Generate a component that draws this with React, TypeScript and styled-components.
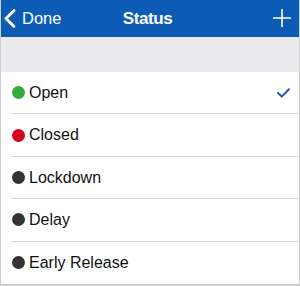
import styled, { createGlobalStyle } from "styled-components";

const Global = createGlobalStyle`
  html, body {
    margin: 0;
    padding: 0;
    background: #ffffff;
  }
  * {
    box-sizing: border-box;
  }
`;

const Screen = styled.div`
  width: 300px;
  height: 286px;
  display: flex;
  flex-direction: column;
  border-left: 1px solid #cfcfcf;
  border-right: 1px solid #cfcfcf;
  border-bottom: 2px solid #cfcfcf;
  font-family: "Liberation Sans", Arial, sans-serif;
  background: #ffffff;
`;

const NavBar = styled.div`
  height: 37px;
  flex: 0 0 37px;
  background: #0c5cb5;
  display: grid;
  grid-template-columns: 1fr auto 1fr;
  align-items: center;
  color: #ffffff;
  padding: 0 8px 0 3px;
`;

const BackButton = styled.div`
  display: flex;
  align-items: center;
  gap: 6px;
  font-size: 16.5px;
  justify-self: start;
`;

const Title = styled.div`
  font-size: 17px;
  font-weight: bold;
  letter-spacing: -0.4px;
`;

const AddButton = styled.div`
  justify-self: end;
  display: flex;
  align-items: center;
  margin-top: -1px;
`;

const Spacer = styled.div`
  flex: 0 0 35px;
  background: #ebebf0;
`;

const List = styled.div`
  flex: 1;
  display: flex;
  flex-direction: column;
`;

const Row = styled.div`
  flex: 1;
  display: flex;
  padding-left: 10px;
`;

const RowInner = styled.div<{ $last?: boolean }>`
  flex: 1;
  display: flex;
  align-items: center;
  padding: 0 9px 0 1px;
  border-bottom: ${(p) => (p.$last ? "none" : "1px solid #dadadd")};
`;

const Dot = styled.span<{ $color: string }>`
  width: 13px;
  height: 13px;
  border-radius: 50%;
  background: ${(p) => p.$color};
  flex: 0 0 13px;
`;

const Label = styled.span`
  margin-left: 4px;
  font-size: 16px;
  color: #111111;
  flex: 1;
`;

const statuses = [
  { name: "Open", color: "#35ab3a", checked: true },
  { name: "Closed", color: "#d6031c" },
  { name: "Lockdown", color: "#333333" },
  { name: "Delay", color: "#333333" },
  { name: "Early Release", color: "#333333" },
];

function App() {
  return (
    <>
      <Global />
      <Screen>
        <NavBar>
          <BackButton>
            <svg width="12" height="19" viewBox="0 0 12 19">
              <polyline
                points="10,1.5 2,9.5 10,17.5"
                fill="none"
                stroke="#ffffff"
                strokeWidth="2.8"
                strokeLinecap="round"
                strokeLinejoin="round"
              />
            </svg>
            Done
          </BackButton>
          <Title>Status</Title>
          <AddButton>
            <svg width="18" height="18" viewBox="0 0 18 18">
              <path d="M9 0 V18 M0 9 H18" stroke="#ffffff" strokeWidth="1.6" />
            </svg>
          </AddButton>
        </NavBar>
        <Spacer />
        <List>
          {statuses.map((s, i) => (
            <Row key={s.name}>
              <RowInner $last={i === statuses.length - 1}>
                <Dot $color={s.color} />
                <Label>{s.name}</Label>
                {s.checked && (
                  <svg width="13" height="10" viewBox="0 0 13 10">
                    <polyline
                      points="1,5 4.8,8.6 12,1.2"
                      fill="none"
                      stroke="#1a5fb4"
                      strokeWidth="2"
                      strokeLinecap="round"
                      strokeLinejoin="round"
                    />
                  </svg>
                )}
              </RowInner>
            </Row>
          ))}
        </List>
      </Screen>
    </>
  );
}

export default App;
